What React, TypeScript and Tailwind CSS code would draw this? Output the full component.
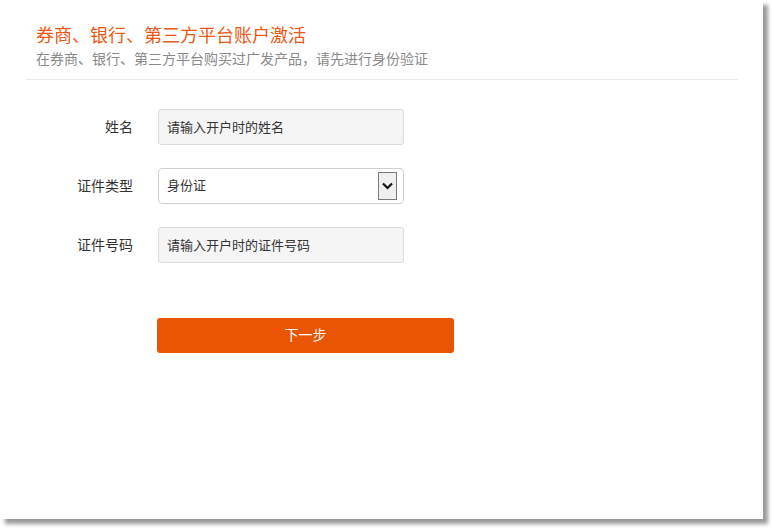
import React from 'react';

const fontStack = { fontFamily: '"Liberation Sans", "Noto Sans CJK SC", sans-serif' };

interface FieldRowProps {
  label: string;
  children: React.ReactNode;
}

const FieldRow: React.FC<FieldRowProps> = ({ label, children }) => {
  return (
    <div className="flex items-center h-[36px]">
      <label className="w-[133px] pr-0 text-right text-[14px] text-[#333]">{label}</label>
      <div className="ml-[25px]">{children}</div>
    </div>
  );
};

const TextInput: React.FC<{ placeholder: string }> = ({ placeholder }) => {
  return (
    <input
      type="text"
      placeholder={placeholder}
      className="w-[246px] h-[36px] px-[8px] text-[13px] bg-[#f5f5f5] border border-[#dcdcdc] rounded-[3px] outline-none placeholder:text-[#333]"
      style={fontStack}
    />
  );
};

const App: React.FC = () => {
  return (
    <div className="w-[772px] h-[528px] bg-white" style={fontStack}>
      <div className="w-[763px] h-[519px] bg-white shadow-[5px_5px_4px_rgba(0,0,0,0.4)]">
        <div className="pt-[24px] pl-[36px]">
          <h1 className="text-[18px] leading-[24px] text-[#eb5a14]">券商、银行、第三方平台账户激活</h1>
          <p className="mt-[1px] text-[14px] leading-[20px] text-[#8a8a8a]">
            在券商、银行、第三方平台购买过广发产品，请先进行身份验证
          </p>
        </div>
        <div className="mt-[10px] ml-[26px] mr-[25px] border-t border-[#ebebeb]" />

        <div className="mt-[29px] flex flex-col gap-[23px]">
          <FieldRow label="姓名">
            <TextInput placeholder="请输入开户时的姓名" />
          </FieldRow>
          <FieldRow label="证件类型">
            <div className="relative w-[246px] h-[36px] bg-white border border-[#cfcfcf] rounded-[4px] flex items-center">
              <span className="pl-[8px] text-[13px] text-[#333]">身份证</span>
              <div className="absolute right-[6px] top-[3px] w-[19px] h-[28px] bg-[#efefef] border border-[#7a7a7a] flex items-center justify-center">
                <svg width="11" height="8" viewBox="0 0 11 8">
                  <path d="M1 1.5 L5.5 6 L10 1.5" fill="none" stroke="#111" strokeWidth="2.2" />
                </svg>
              </div>
            </div>
          </FieldRow>
          <FieldRow label="证件号码">
            <TextInput placeholder="请输入开户时的证件号码" />
          </FieldRow>
        </div>

        <div className="mt-[55px] ml-[157px]">
          <button className="w-[297px] h-[35px] rounded-[3px] bg-[#ea5504] text-white text-[14px]">
            下一步
          </button>
        </div>
      </div>
    </div>
  );
};

export default App;
